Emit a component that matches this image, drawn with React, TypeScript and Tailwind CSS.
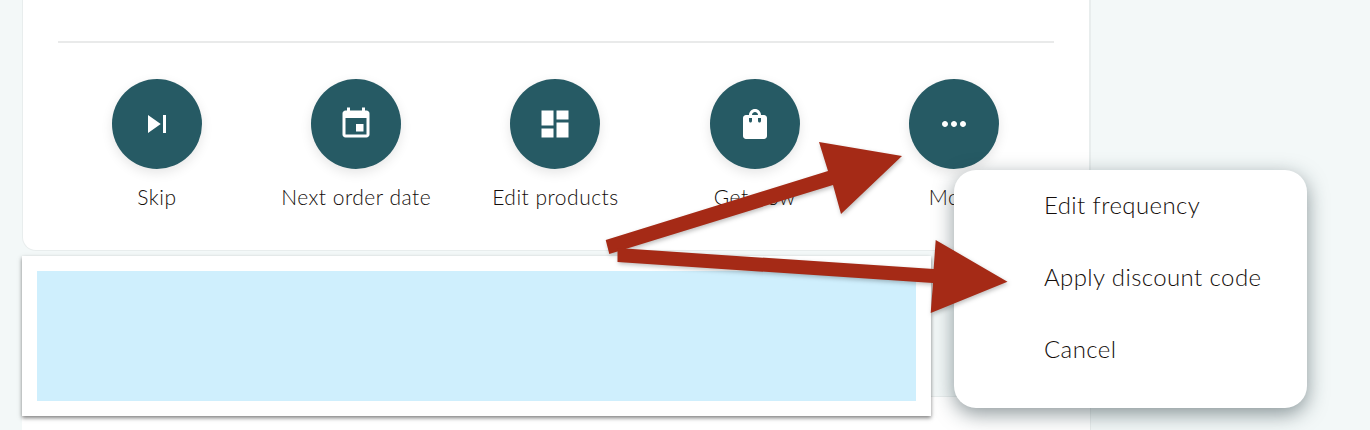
const actions = [
  { label: 'Skip', d: 'M6 18l8.5-6L6 6v12zM16 6v12h2V6h-2z' },
  { label: 'Next order date', d: 'M17 12h-5v5h5v-5zM16 1v2H8V1H6v2H5c-1.11 0-1.99.9-1.99 2L3 19c0 1.1.89 2 2 2h14c1.1 0 2-.9 2-2V5c0-1.1-.9-2-2-2h-1V1h-2zm3 18H5V8h14v11z' },
  { label: 'Edit products', d: 'M3 13h8V3H3v10zm0 8h8v-6H3v6zm10 0h8V11h-8v10zm0-18v6h8V3h-8z' },
  { label: 'Get now', d: 'M18 6h-2c0-2.21-1.79-4-4-4S8 3.79 8 6H6c-1.1 0-2 .9-2 2v12c0 1.1.9 2 2 2h12c1.1 0 2-.9 2-2V8c0-1.1-.9-2-2-2zm-8 4c0 .55-.45 1-1 1s-1-.45-1-1V8h2v2zm2-6c1.1 0 2 .9 2 2h-4c0-1.1.9-2 2-2zm4 6c0 .55-.45 1-1 1s-1-.45-1-1V8h2v2z' },
  { label: 'More', d: 'M6 10c-1.1 0-2 .9-2 2s.9 2 2 2 2-.9 2-2-.9-2-2-2zm12 0c-1.1 0-2 .9-2 2s.9 2 2 2 2-.9 2-2-.9-2-2-2zm-6 0c-1.1 0-2 .9-2 2s.9 2 2 2 2-.9 2-2-.9-2-2-2z' },
]

const menuItems = ['Edit frequency', 'Apply discount code', 'Cancel']

function App() {
  return (
    <div className="relative h-[430px] w-[1370px] overflow-hidden bg-[#f3f8f8] font-['Lato',sans-serif] text-[#140e0b]">
      <div className="flex w-[1091px] flex-col border-r border-[#e8eded] pl-[22px]">
        {/* top card */}
        <div className="h-[251px] rounded-b-[14px] border-x border-b border-[#e8eded] bg-white px-[35px] pt-[41px]">
          <div className="h-[2px] bg-[#e9eaea]" />
          <div className="ml-[-0.7px] mt-[36px] grid grid-cols-[repeat(5,199.25px)]">
            {actions.map(a => (
              <div key={a.label} className="flex flex-col items-center">
                <div className="flex h-[90px] w-[90px] items-center justify-center rounded-full bg-[#265a64] shadow-[0_4px_12px_rgba(0,0,0,0.1)]">
                  <svg viewBox="0 0 24 24" className="h-9 w-9 fill-white"><path d={a.d} /></svg>
                </div>
                <div className="mt-[16px] whitespace-nowrap text-[21px] font-light leading-[24px] tracking-[0.5px]">{a.label}</div>
              </div>
            ))}
          </div>
        </div>
        {/* next card, mostly cut off */}
        <div className="mt-[145px] h-[40px] border-t border-[#e8eded] bg-white" />
      </div>

      {/* redaction box */}
      <div className="absolute left-[22px] top-[256px] h-[160px] w-[909px] bg-white p-[15px] shadow-[0_2px_4px_rgba(0,0,0,0.5)]">
        <div className="h-[130px] w-[879px] bg-[#cfeffd]" />
      </div>

      {/* popup menu */}
      <div className="absolute left-[954px] top-[170px] flex h-[238px] w-[353px] flex-col items-start rounded-[22px] bg-white pl-[90px] pt-[17px] shadow-[0_6px_20px_rgba(30,50,55,0.5)]">
        {menuItems.map(item => (
          <div key={item} className="flex h-[72px] w-full items-start pt-[2px] text-[24px] font-light leading-[32px] tracking-[0.4px]">{item}</div>
        ))}
      </div>

      {/* annotation arrows */}
      <svg className="pointer-events-none absolute left-0 top-0 drop-shadow-[1px_2px_2px_rgba(0,0,0,0.25)]" width="1370" height="430" viewBox="0 0 1370 430">
        <polygon fill="#a52a16" points="605.7,240 828,171 819,142 902,156 841,214 833,185 609.3,254" />
        <polygon fill="#a52a16" points="617.5,248 933.6,269 935.7,240 1007.5,281.7 930.7,313 933,283 617.5,262" />
      </svg>
    </div>
  )
}

export default App
